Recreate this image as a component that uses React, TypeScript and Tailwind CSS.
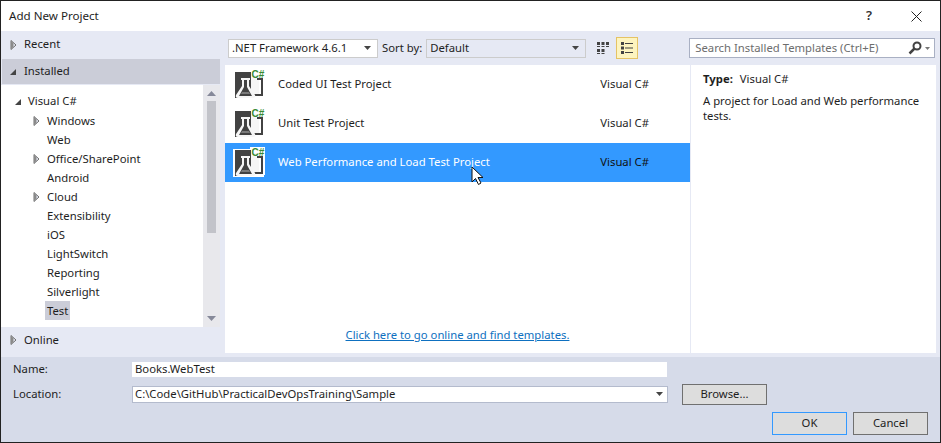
const FONT = "font-['Noto_Sans',sans-serif]";

const Closed = () => (
  <svg width="7" height="10" viewBox="0 0 7 10" className="shrink-0">
    <path d="M1 .5v9l5-4.500z" fill="#e6e9f4" stroke="#6f6f6f" />
    <path d="M1 1v8l2.500-2V3z" fill="#8a8a8a" />
  </svg>
);

const Opened = () => (
  <svg width="8" height="8" viewBox="0 0 8 8" className="shrink-0">
    <path d="M7 1v6H1z" fill="#444" />
  </svg>
);

const Caret = () => (
  <svg width="7" height="4" viewBox="0 0 7 4" className="shrink-0">
    <path d="M0 0h7L3.500 4z" fill="#444" />
  </svg>
);

const TemplateIcon = ({ selected }: { selected?: boolean }) => (
  <svg width="32" height="32" viewBox="0 0 32 32" className="shrink-0">
    {selected && <path d="M0 2h17V0h15v28h-1v2H0z" fill="#fff" />}
    <path d="M18 6h8v20h-8z" fill="#f6f6f6" />
    <path d="M2 3h16v26H2z" fill="#424242" />
    <path d="M24 9h6v18H19v-2h9V11h-4z" fill="#424242" />
    <path d="M8 9h9v2h-1v6l6 9q1 3-2 3H5q-3 0-2-3l6-9v-6H8z" fill="#f6f6f6" />
    <path d="M11 11h3v7l5 9H6l5-9z" fill="#424242" />
    <path d="M9 23h7l1 2H8z" fill="#7a7a7a" />
    <text x="18.500" y="9" fontSize="10" fontWeight="700" fill="#388a34" fontFamily="Liberation Sans, sans-serif">
      C#
    </text>
  </svg>
);

const TreeRow = ({ label, arrow, selected }: { label: string; arrow?: boolean; selected?: boolean }) => (
  <div className="flex h-[19px] items-center">
    <div className="flex w-[44px] justify-end pr-[5px]">{arrow && <Closed />}</div>
    <span className={`px-[2px] h-[19px] leading-[19px] ${selected ? "bg-[#cbcdd8]" : ""}`}>{label}</span>
  </div>
);

const ProjectRow = ({ name, selected }: { name: string; selected?: boolean }) => (
  <div className={`flex h-[39px] items-center pl-[8px] pr-[41px] ${selected ? "bg-[#3399ff] text-white" : ""}`}>
    <TemplateIcon selected={selected} />
    <span className="ml-[13px] flex-1">{name}</span>
    <span className={selected ? "text-[#111]" : ""}>Visual C#</span>
  </div>
);

const Btn = ({ label, w, h, focus }: { label: string; w: string; h: string; focus?: boolean }) => (
  <button className={`${w} ${h} border bg-[#dddddd] ${focus ? "border-[#3399ff]" : "border-[#707070]"}`}>{label}</button>
);

export default function App() {
  return (
    <div className={`${FONT} flex h-[443px] w-[941px] flex-col overflow-hidden border border-[#222] bg-white text-[11.3px] text-[#1e1e1e]`}>
      {/* title bar */}
      <div className="flex h-[30px] shrink-0 items-center bg-white pl-[8px]">
        <span className="flex-1 text-[11.6px]">Add New Project</span>
        <span className="mr-[39px] text-[13px] font-semibold text-[#333]">?</span>
        <svg width="11" height="11" viewBox="0 0 11 11" className="mr-[18px]">
          <path d="M.5.500l10 10M10.500.500l-10 10" stroke="#222" strokeWidth="1" />
        </svg>
      </div>

      {/* main area */}
      <div className="flex h-[326px] shrink-0 bg-[#e6e9f4]">
        <div className="flex w-[219px] shrink-0 flex-col">
          <div className="flex h-[28px] shrink-0 items-center gap-[7px] pb-[1px] pl-[9px]">
            <Closed />
            <span>Recent</span>
          </div>
          <div className="ml-px flex h-[25px] shrink-0 items-center gap-[7px] bg-[#cbcdd8] pl-[7px]">
            <Opened />
            <span>Installed</span>
          </div>
          <div className="mt-px flex h-[242px] shrink-0 bg-white">
            <div className="flex-1 pt-[7px]">
              <div className="flex h-[19px] items-center pl-[13px]">
                <Opened />
                <span className="ml-[6px]">Visual C#</span>
              </div>
              <TreeRow label="Windows" arrow />
              <TreeRow label="Web" />
              <TreeRow label="Office/SharePoint" arrow />
              <TreeRow label="Android" />
              <TreeRow label="Cloud" arrow />
              <TreeRow label="Extensibility" />
              <TreeRow label="iOS" />
              <TreeRow label="LightSwitch" />
              <TreeRow label="Reporting" />
              <TreeRow label="Silverlight" />
              <TreeRow label="Test" selected />
            </div>
            <div className="flex w-[17px] shrink-0 flex-col items-center bg-[#e8e8ec]">
              <svg width="9" height="5" viewBox="0 0 9 5" className="mt-[6px] shrink-0">
                <path d="M0 5h9L4.500 0z" fill="#868999" />
              </svg>
              <div className="mt-[5px] h-[132px] w-[9px] bg-[#c2c3c9]" />
              <div className="flex-1" />
              <svg width="9" height="5" viewBox="0 0 9 5" className="mb-[6px] shrink-0">
                <path d="M0 0h9L4.500 5z" fill="#868999" />
              </svg>
            </div>
          </div>
          <div className="flex flex-1 items-center gap-[7px] pb-[4px] pl-[9px]">
            <Closed />
            <span>Online</span>
          </div>
        </div>

        <div className="ml-[5px] flex w-[711px] shrink-0 flex-col">
          {/* toolbar */}
          <div className="flex h-[34px] shrink-0 items-center">
            <div className="ml-[3px] flex h-[19px] w-[150px] items-center justify-between border border-[#ccc] bg-white pl-[3px] pr-[6px]">
              <span>.NET Framework 4.6.1</span>
              <Caret />
            </div>
            <span className="ml-[4px]">Sort by:</span>
            <div className="ml-[4px] flex h-[19px] w-[160px] items-center justify-between border border-[#ccc] bg-[#e6e9f4] pl-[3px] pr-[6px]">
              <span>Default</span>
              <Caret />
            </div>
            <svg width="14" height="14" viewBox="0 0 14 14" className="ml-[10px]" fill="#424242">
              <path d="M1 1h3v3H1zM5.500 1h3v3h-3zM10 1h3v3h-3zM1 5h3v1H1zM5.500 5h3v1h-3zM10 5h3v1h-3zM1 8h3v3H1zM5.500 8h3v3h-3zM1 12h3v1H1zM5.500 12h3v1h-3z" />
            </svg>
            <div className="ml-[6px] flex h-[22px] w-[22px] items-center justify-center border border-[#e5c365] bg-[#fdf4bf]">
              <svg width="14" height="14" viewBox="0 0 14 14" fill="#424242">
                <path d="M1 1h3v3H1zM5 2h8v1H5zM1 5.500h3v3H1zM5 6.500h8v1H5zM1 10h3v3H1zM5 11h8v1H5z" />
              </svg>
            </div>
            <div className="ml-[51px] flex h-[20px] w-[246px] items-center justify-between border border-[#a9b0c3] bg-white pl-[5px] pr-[4px] text-[#6d6d6d]">
              <span>Search Installed Templates (Ctrl+E)</span>
              <div className="flex items-center gap-[3px]">
                <svg width="14" height="14" viewBox="0 0 14 14" fill="none">
                  <circle cx="9" cy="5" r="3.500" stroke="#424242" strokeWidth="2" />
                  <path d="M6.500 7.500l-5 5" stroke="#424242" strokeWidth="2.500" />
                </svg>
                <svg width="5" height="3" viewBox="0 0 5 3">
                  <path d="M0 0h5L2.500 3z" fill="#777" />
                </svg>
              </div>
            </div>
          </div>

          {/* list + details */}
          <div className="flex h-[288px] shrink-0">
            <div className="flex w-[465px] shrink-0 flex-col bg-white">
              <ProjectRow name="Coded UI Test Project" />
              <ProjectRow name="Unit Test Project" />
              <ProjectRow name="Web Performance and Load Test Project" selected />
              <div className="flex flex-1 items-end justify-center pb-[9px]">
                <a className="text-[#0e70c0] underline">Click here to go online and find templates.</a>
              </div>
            </div>
            <div className="ml-px flex-1 bg-white pl-[12px] pt-[5px]">
              <div className="leading-[18px]">
                <span className="font-bold">Type:</span>
                <span className="ml-[7px]">Visual C#</span>
              </div>
              <p className="mt-[5px] w-[226px] leading-[15px]">A project for Load and Web performance tests.</p>
            </div>
          </div>
        </div>
      </div>

      {/* bottom form */}
      <div className="flex-1 bg-[#d6dbe9] pt-[5px]">
        <div className="flex h-[15px] items-center pl-[12px]">
          <span className="w-[119px]">Name:</span>
          <div className="flex h-[15px] w-[535px] items-center bg-white pl-[3px]">Books.WebTest</div>
        </div>
        <div className="mt-[7px] flex h-[20px] items-center pl-[12px]">
          <span className="w-[119px]">Location:</span>
          <div className="flex h-[17px] w-[536px] items-center justify-between border border-[#b4bbcd] bg-white pl-[2px] pr-[4px]">
            <span>C:\Code\GitHub\PracticalDevOpsTraining\Sample</span>
            <Caret />
          </div>
          <div className="ml-[14px]">
            <Btn label="Browse..." w="w-[85px]" h="h-[21px]" />
          </div>
        </div>
        <div className="mt-[8px] flex justify-end gap-[6px] pr-[12px]">
          <Btn label="OK" w="w-[75px]" h="h-[23px]" focus />
          <Btn label="Cancel" w="w-[75px]" h="h-[23px]" />
        </div>
      </div>

      {/* mouse pointer */}
      <svg width="14" height="20" viewBox="0 0 14 20" className="absolute left-[471px] top-[166px]">
        <path d="M1 1v15l3.500-3.500 3 6 2.500-1.500-3-5.500h5z" fill="#fff" stroke="#111" strokeWidth="1" />
      </svg>
    </div>
  );
}
